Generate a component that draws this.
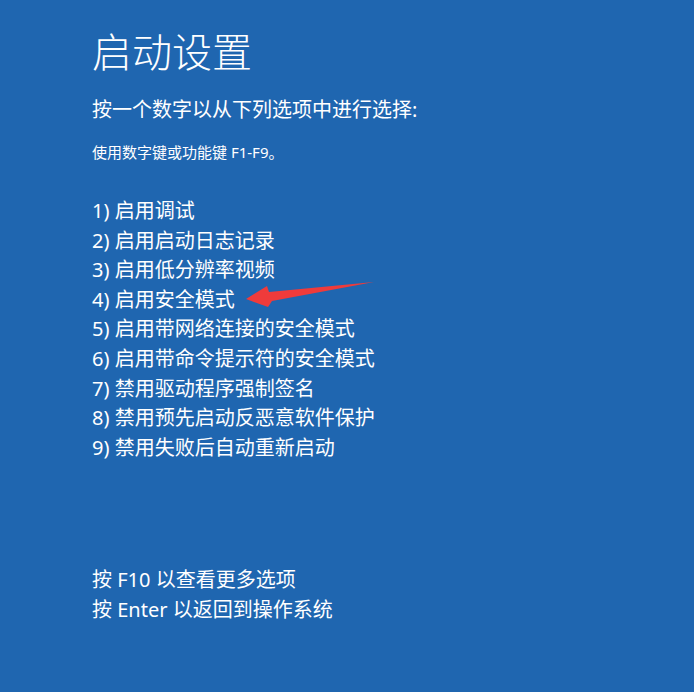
export default function App() {
  const options = [
    "1) 启用调试",
    "2) 启用启动日志记录",
    "3) 启用低分辨率视频",
    "4) 启用安全模式",
    "5) 启用带网络连接的安全模式",
    "6) 启用带命令提示符的安全模式",
    "7) 禁用驱动程序强制签名",
    "8) 禁用预先启动反恶意软件保护",
    "9) 禁用失败后自动重新启动",
  ];

  return (
    <div
      className="relative min-h-screen h-[692px] overflow-hidden bg-[#1f66b0] text-white pl-[92px] pt-[32px]"
      style={{ fontFamily: '"Noto Sans", "Noto Sans CJK SC", sans-serif' }}
    >
      {/* title */}
      <h1 className="text-[40px] leading-[40px] font-light">启动设置</h1>

      <p className="mt-[23px] text-[20px] leading-[30px]">
        按一个数字以从下列选项中进行选择:
      </p>
      <p className="mt-[17px] text-[15px] leading-[20px]">使用数字键或功能键 F1-F9。</p>

      {/* options */}
      <ul className="mt-[34px] text-[20px] leading-[29.6px]">
        {options.map((o) => (
          <li key={o}>{o}</li>
        ))}
      </ul>

      {/* footer */}
      <div className="mt-[103px] text-[20px] leading-[30px]">
        <p>按 F10 以查看更多选项</p>
        <p>按 Enter 以返回到操作系统</p>
      </div>

      {/* red annotation arrow */}
      <svg
        className="absolute left-0 top-0 pointer-events-none"
        width="694"
        height="692"
        viewBox="0 0 694 692"
      >
        <polygon
          points="246,299 267,286 269,292 374,282 272,301 268,307"
          fill="#ef3b3b"
        />
      </svg>
    </div>
  );
}
